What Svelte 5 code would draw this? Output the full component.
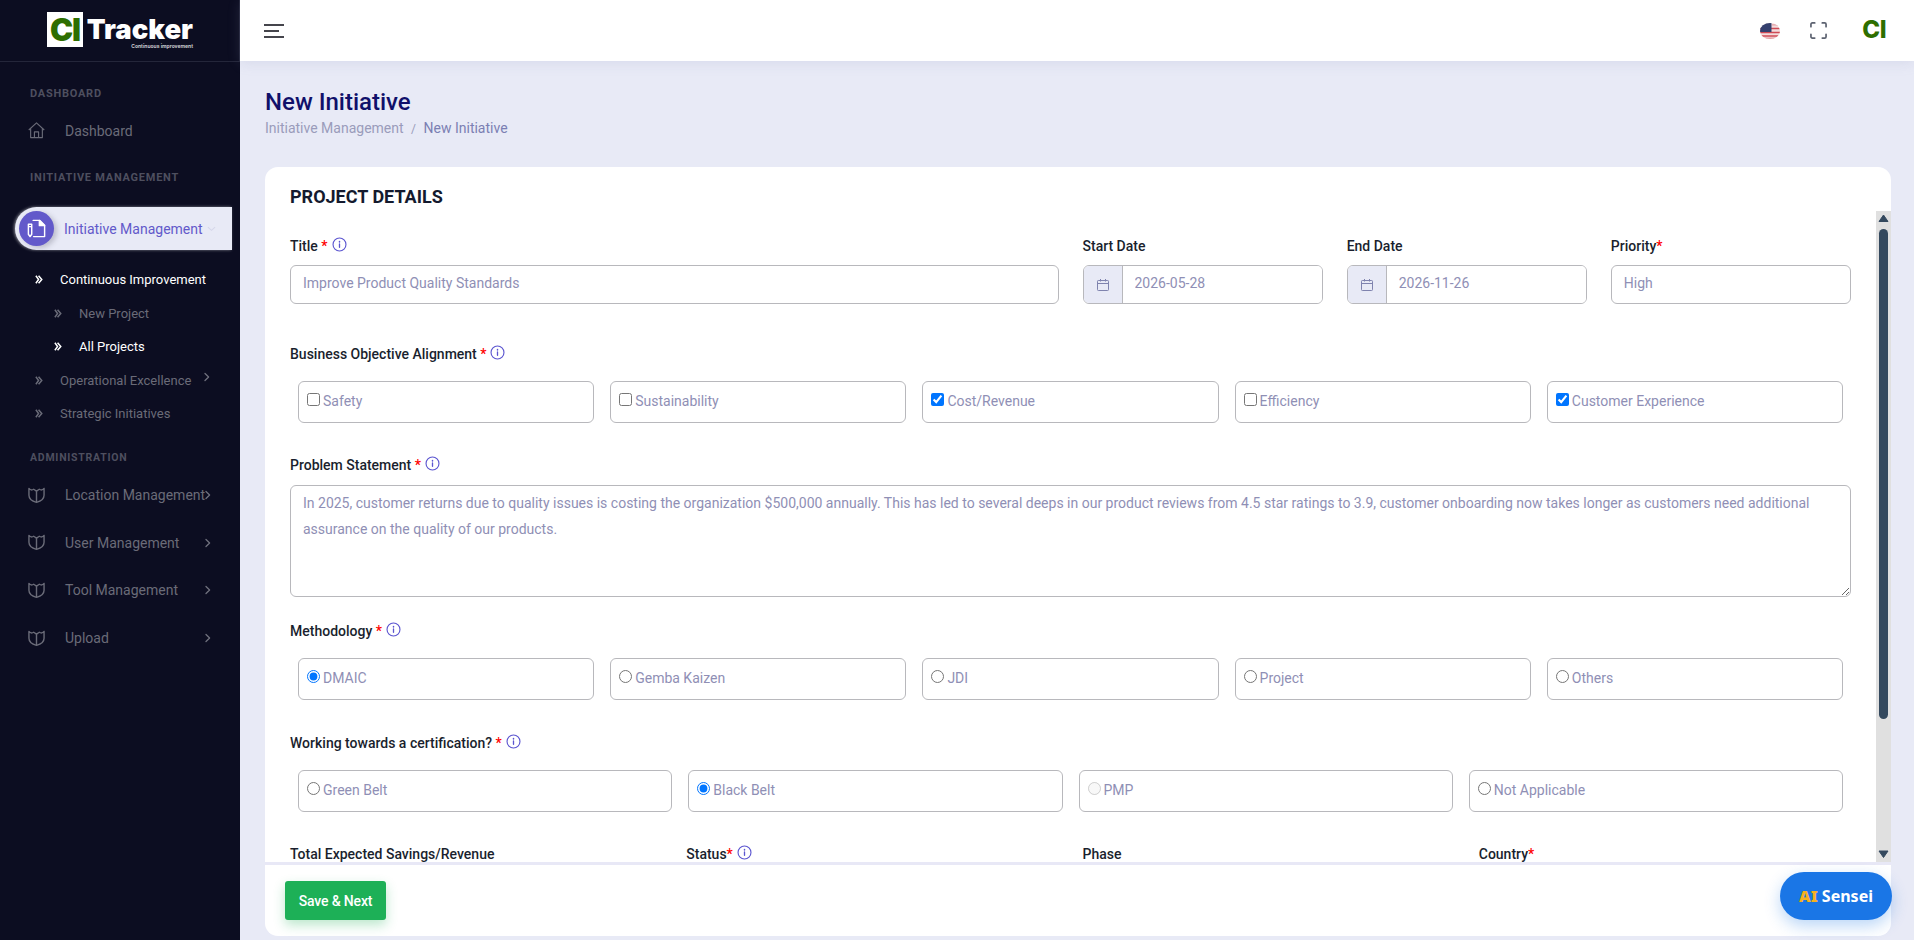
<script>
  const goals = [
    { label: 'Safety', on: false },
    { label: 'Sustainability', on: false },
    { label: 'Cost/Revenue', on: true },
    { label: 'Efficiency', on: false },
    { label: 'Customer Experience', on: true }
  ];
  const methods = [
    { label: 'DMAIC', on: true },
    { label: 'Gemba Kaizen', on: false },
    { label: 'JDI', on: false },
    { label: 'Project', on: false },
    { label: 'Others', on: false }
  ];
  const certs = [
    { label: 'Green Belt', on: false },
    { label: 'Black Belt', on: true },
    { label: 'PMP', on: false, off: true },
    { label: 'Not Applicable', on: false }
  ];
  const admin = ['Location Management', 'User Management', 'Tool Management', 'Upload'];
  const problem = 'In 2025, customer returns due to quality issues is costing the organization $500,000 annually. This has led to several deeps in our product reviews from 4.5 star ratings to 3.9, customer onboarding now takes longer as customers need additional assurance on the quality of our products.';
</script>

{#snippet info()}
  <svg class="info" viewBox="0 0 16 16" fill="none" stroke="currentColor" stroke-width="1.2" stroke-linecap="round">
    <circle cx="8" cy="8" r="6.9" />
    <path d="M8 7.4v3.6" stroke-width="1.4" />
    <path d="M8 4.9v.3" stroke-width="1.6" />
  </svg>
{/snippet}

{#snippet dbl()}
  <svg class="dbl" viewBox="0 0 9 10" fill="none" stroke="currentColor" stroke-width="1.7">
    <path d="M1 .8 4 5 1 9.200" />
    <path d="M4 .8 7.600 5 4 9.200" />
  </svg>
{/snippet}

{#snippet chev()}
  <svg class="chev" viewBox="0 0 8 10" fill="none" stroke="currentColor" stroke-width="1.3" stroke-linecap="round" stroke-linejoin="round">
    <path d="M2 1.500 5.600 5 2 8.500" />
  </svg>
{/snippet}

{#snippet shield()}
  <svg class="nav-ico" viewBox="0 0 18 18" fill="none" stroke="currentColor" stroke-width="1.5" stroke-linejoin="round">
    <path d="M1 1.500c1.500 1.800 3.200 2 5 .9L9 4.300l3-1.900c1.800 1.100 3.500.9 5-.9v7.200c0 3.700-3.400 6.300-8 7.600-4.600-1.300-8-3.900-8-7.600z" />
    <path d="M9 4.300v12" />
  </svg>
{/snippet}

{#snippet cal()}
  <span class="date-ico">
    <svg viewBox="0 0 14 14" fill="none" stroke="currentColor" stroke-width="1"><rect x="1.500" y="2.500" width="11" height="10" rx=".8" /><path d="M1.500 5.500h11M4.500 1v2.500M9.500 1v2.500" /></svg>
  </span>
{/snippet}

<div class="shell">
  <aside class="sidebar">
    <div class="brand">
      <div class="logo">
        <span class="logo-ci">CI</span>
        <div class="logo-words">
          <span class="logo-name">Tracker</span>
          <span class="logo-sub">Continuous improvement</span>
        </div>
      </div>
    </div>

    <nav class="nav">
      <div class="sec sec-a">DASHBOARD</div>
      <div class="item item-dash">
        <svg class="nav-ico" viewBox="0 0 18 18" fill="none" stroke="currentColor" stroke-width="1.2" stroke-linejoin="round">
          <path d="M.8 8.500 9 1l8.200 7.500" />
          <path d="M2.800 7v9.500h12.400V7" />
          <path d="M6.800 16.500v-6h4.400v6" />
        </svg>
        <span>Dashboard</span>
      </div>

      <div class="sec sec-b">INITIATIVE MANAGEMENT</div>
      <div class="active">
        <span class="active-dot">
          <svg viewBox="0 0 22 22" fill="none" stroke="#fff" stroke-width="1.500" stroke-linejoin="round" stroke-linecap="round">
            <path d="M7.500 2.500h7L19.500 7.500v12H8" />
            <path d="M14 2.500 19.500 8H14z" fill="#fff" />
            <path d="M2.500 6.500h3.500V17l-1.750 2.500L2.500 17zM2.500 9h3.500" />
          </svg>
        </span>
        <span class="active-label">Initiative Management</span>
        <svg class="active-chev" viewBox="0 0 10 6" fill="none" stroke="#d5d7ea" stroke-width="1.200"><path d="M1 1l4 3.500L9 1" /></svg>
      </div>

      <div class="sub sub-first on">{@render dbl()}<span>Continuous Improvement</span></div>
      <div class="sub deep">{@render dbl()}<span>New Project</span></div>
      <div class="sub deep on">{@render dbl()}<span>All Projects</span></div>
      <div class="sub">{@render dbl()}<span>Operational Excellence</span><span class="chev-up">{@render chev()}</span></div>
      <div class="sub">{@render dbl()}<span>Strategic Initiatives</span></div>

      <div class="sec sec-c">ADMINISTRATION</div>
      {#each admin as a}
        <div class="item item-admin">
          {@render shield()}
          <span>{a}</span>
          {@render chev()}
        </div>
      {/each}
    </nav>
  </aside>

  <div class="body">
    <header class="topbar">
      <button class="burger" aria-label="Menu">
        <svg viewBox="0 0 20 14" fill="none" stroke="#45454c" stroke-width="2">
          <path d="M0 1h20M0 7h15M0 13h20" />
        </svg>
      </button>
      <div class="top-right">
        <svg class="flag" viewBox="0 0 20 16" aria-label="US flag">
          <defs><clipPath id="fc"><ellipse cx="10" cy="8" rx="10" ry="8" /></clipPath></defs>
          <g clip-path="url(#fc)">
            <rect width="20" height="16" fill="#f3dcdc" />
            <path d="M0 5.500h20M0 9.500h20M0 13h20" stroke="#cf4a55" stroke-width="1.300" />
            <path d="M12 1.800h8" stroke="#e4a0a5" stroke-width="1.200" />
            <path d="M0 15.200h20" stroke="#e4a0a5" stroke-width="1.600" />
            <rect width="11.500" height="9" fill="#34406e" />
          </g>
        </svg>
        <svg class="full" viewBox="0 0 18 18" fill="none" stroke="#5c6270" stroke-width="1.800" stroke-linecap="round" stroke-linejoin="round">
          <path d="M1 5V2.500A1.500 1.500 0 0 1 2.500 1H5M13 1h2.500A1.500 1.500 0 0 1 17 2.500V5M17 13v2.500a1.500 1.500 0 0 1-1.500 1.500H13M5 17H2.500A1.500 1.500 0 0 1 1 15.500V13" />
        </svg>
        <span class="top-ci">CI</span>
      </div>
    </header>

    <main class="main">
      <div class="page-head">
        <h1>New Initiative</h1>
        <div class="crumbs">
          <span class="crumb">Initiative Management</span>
          <span class="slash">/</span>
          <span class="crumb-now">New Initiative</span>
        </div>
      </div>

      <section class="card">
        <h2>PROJECT DETAILS</h2>
        <div class="pane">
          <div class="scroll">
            <div class="row">
              <div class="col c6">
                <div class="lab">Title <i>*</i> {@render info()}</div>
                <input class="ctl" readonly value="Improve Product Quality Standards" />
              </div>
              <div class="col c2">
                <div class="lab">Start Date</div>
                <div class="date">
                  {@render cal()}
                  <input readonly value="2026-05-28" />
                </div>
              </div>
              <div class="col c2">
                <div class="lab">End Date</div>
                <div class="date">
                  {@render cal()}
                  <input readonly value="2026-11-26" />
                </div>
              </div>
              <div class="col c2">
                <div class="lab">Priority<i>*</i></div>
                <input class="ctl" readonly value="High" />
              </div>
            </div>

            <div class="lab lab-goal">Business Objective Alignment <i>*</i> {@render info()}</div>
            <div class="opts five">
              {#each goals as g}
                <label class="opt"><input type="checkbox" checked={g.on} />{g.label}</label>
              {/each}
            </div>

            <div class="lab lab-prob">Problem Statement <i>*</i> {@render info()}</div>
            <textarea class="area" readonly>{problem}</textarea>

            <div class="lab lab-meth">Methodology <i>*</i> {@render info()}</div>
            <div class="opts five">
              {#each methods as m}
                <label class="opt"><input type="radio" name="method" checked={m.on} />{m.label}</label>
              {/each}
            </div>

            <div class="lab lab-cert">Working towards a certification? <i>*</i> {@render info()}</div>
            <div class="opts four">
              {#each certs as c}
                <label class="opt"><input type="radio" name="cert" checked={c.on} disabled={c.off} />{c.label}</label>
              {/each}
            </div>

            <div class="row row-last">
              <div class="col c3">
                <div class="lab">Total Expected Savings/Revenue</div>
                <input class="ctl" readonly value="500000" />
              </div>
              <div class="col c3">
                <div class="lab">Status<i>*</i> {@render info()}</div>
                <input class="ctl" readonly value="Draft" />
              </div>
              <div class="col c3">
                <div class="lab">Phase</div>
                <input class="ctl" readonly value="Define" />
              </div>
              <div class="col c3">
                <div class="lab">Country<i>*</i></div>
                <input class="ctl" readonly value="United States" />
              </div>
            </div>
          </div>
          <div class="bar" aria-hidden="true">
            <svg class="arrow" viewBox="0 0 15 17"><path d="M7.500 4 12 10.500H3z" fill="#34495e" stroke="#34495e" stroke-linejoin="round" /></svg>
            <div class="thumb"></div>
            <svg class="arrow arrow-down" viewBox="0 0 15 17"><path d="M3 6h9l-4.500 6.500z" fill="#34495e" stroke="#34495e" stroke-linejoin="round" /></svg>
          </div>
        </div>
        <footer class="foot">
          <button class="save">Save &amp; Next</button>
        </footer>
      </section>
    </main>
  </div>

  <button class="sensei"><b>AI</b> Sensei</button>
</div>

<style>
  :global(body) {
    margin: 0;
    font-family: Roboto, "Liberation Sans", sans-serif;
    background: #e8eaf6;
  }
  .shell {
    display: flex;
    height: 940px;
    overflow: hidden;
    position: relative;
  }

  /* sidebar */
  .sidebar {
    flex: 0 0 240px;
    background: #0c0d21;
    color: #6a6b78;
    display: flex;
    flex-direction: column;
  }
  .brand {
    height: 62px;
    box-sizing: border-box;
    border-bottom: 1px solid #24263a;
    border-right: 1px solid #24263a;
    padding: 12px 0 0 47px;
  }
  .logo {
    display: flex;
    align-items: flex-start;
    gap: 1px;
  }
  .logo-ci {
    width: 36px;
    height: 35px;
    background: #fff;
    color: #2e6e00;
    font: 900 31px/36px Inter, sans-serif;
    text-align: center;
    letter-spacing: -1px;
  }
  .logo-words {
    display: flex;
    flex-direction: column;
    align-items: flex-end;
    width: 109px;
    margin-top: 4px;
  }
  .logo-name {
    color: #fff;
    font: 900 27.500px/27px Inter, sans-serif;
    height: 27px;
    white-space: nowrap;
  }
  .logo-sub {
    color: #c9c9cf;
    font: 700 5px/6px Inter, sans-serif;
    white-space: nowrap;
  }
  .sec {
    font-size: 11px;
    font-weight: 700;
    letter-spacing: .75px;
    color: #4e4f5f;
    padding-left: 30px;
    line-height: 14px;
  }
  .sec-a { margin-top: 25px; }
  .sec-b { margin-top: 17px; }
  .sec-c { margin-top: 20px; margin-bottom: 7px; font-size: 10.500px; }
  .item {
    display: flex;
    align-items: center;
    font-size: 14px;
    padding-left: 28px;
    height: 47px;
  }
  .item-dash { margin-top: 6px; }
  .item-admin { height: 47.600px; }
  .item > span {
    margin-left: 20px;
    width: 139px;
    white-space: nowrap;
  }
  .nav-ico {
    width: 17px;
    height: 17px;
    flex: none;
  }
  .chev {
    width: 8px;
    height: 10px;
    flex: none;
    color: #70717e;
  }
  .active {
    margin: 22px 0 0 15px;
    width: 217px;
    height: 43px;
    background: #e8eaf6;
    border-radius: 22px 0 0 22px;
    display: flex;
    align-items: center;
    position: relative;
    box-shadow: -1px 0 3px rgba(255, 255, 255, .5);
  }
  .active-dot {
    width: 35px;
    height: 35px;
    border-radius: 50%;
    background: #6259ca;
    margin-left: 4px;
    display: flex;
    align-items: center;
    justify-content: center;
    box-shadow: 3px 2px 5px rgba(60, 60, 80, .25);
  }
  .active-dot svg {
    width: 21px;
    height: 21px;
  }
  .active-label {
    margin-left: 10px;
    font-size: 14px;
    color: #6259ca;
  }
  .active-chev {
    width: 9px;
    height: 6px;
    margin-left: 4px;
  }
  .sub {
    display: flex;
    align-items: center;
    height: 33.500px;
    font-size: 13px;
    padding-left: 35px;
    color: #6a6b78;
    position: relative;
  }
  .sub.on { color: #fff; }
  .sub.deep { padding-left: 54px; }
  .sub-first { margin-top: 13px; }
  .dbl {
    width: 8px;
    height: 9px;
    margin-right: 17px;
    flex: none;
  }
  .chev-up {
    position: absolute;
    left: 203px;
    top: 6px;
  }

  /* main */
  .body {
    flex: 1;
    min-width: 0;
    display: flex;
    flex-direction: column;
  }
  .topbar {
    height: 61px;
    flex: none;
    background: #fff;
    display: flex;
    align-items: center;
    justify-content: space-between;
    padding: 0 28px 0 24px;
    box-shadow: 0 2px 12px rgba(140, 145, 190, .18);
    position: relative;
  }
  .burger {
    width: 20px;
    height: 14px;
    border: 0;
    padding: 0;
    background: none;
  }
  .burger svg { display: block; }
  .top-right {
    display: flex;
    align-items: center;
  }
  .flag { width: 20px; height: 16px; }
  .full { width: 17px; height: 17px; margin-left: 30px; }
  .top-ci {
    margin-left: 35px;
    margin-top: -2px;
    font: 800 24px/28px Inter, sans-serif;
    color: #2e6e00;
    letter-spacing: -.5px;
  }
  .main {
    flex: 1;
    min-height: 0;
    display: flex;
    flex-direction: column;
    padding: 27px 23px 4px 25px;
  }
  .page-head { height: 79px; flex: none; }
  h1 {
    margin: 0;
    font-size: 24px;
    line-height: 28px;
    font-weight: 500;
    color: #10106a;
  }
  .crumbs {
    margin-top: 2px;
    font-size: 14px;
    line-height: 20px;
    color: #9a9cbb;
  }
  .slash { margin: 0 4px; font-size: 12px; }
  .crumb-now { color: #7b7fb3; }
  .card {
    flex: 1;
    min-height: 0;
    background: #fff;
    border-radius: 13px;
    display: flex;
    flex-direction: column;
  }
  h2 {
    margin: 0;
    font-size: 18px;
    line-height: 22px;
    font-weight: 700;
    color: #141a2e;
    padding: 19px 25px 3px;
    flex: none;
  }
  .pane {
    flex: 1;
    min-height: 0;
    display: flex;
  }
  .scroll {
    flex: 1;
    min-width: 0;
    overflow-y: auto;
    scrollbar-width: none;
    padding: 25px 25px 0;
    box-sizing: border-box;
  }
  .bar {
    flex: 0 0 15px;
    background: #e0e0e0;
    display: flex;
    flex-direction: column;
  }
  .arrow {
    width: 15px;
    height: 17px;
    flex: none;
    display: block;
  }
  .arrow-down { margin-top: auto; }
  .thumb {
    width: 9px;
    height: 490px;
    margin: 1px 0 0 3px;
    background: #34495e;
    border-radius: 5px;
    flex: none;
  }
  .row {
    display: grid;
    column-gap: 24px;
    grid-template-columns: repeat(12, 1fr);
  }
  .c6 { grid-column: span 6; }
  .c3 { grid-column: span 3; }
  .c2 { grid-column: span 2; }
  .col { min-width: 0; }
  .lab {
    font-size: 14px;
    line-height: 20px;
    font-weight: 500;
    color: #1a1f2e;
    display: flex;
    align-items: center;
    white-space: pre;
  }
  .lab i {
    font-style: normal;
    color: #f00;
  }
  .info {
    width: 15px;
    height: 15px;
    color: #5b55d0;
    margin: -3px 0 0 4px;
  }
  .ctl, .date, .area {
    box-sizing: border-box;
    border: 1px solid #b8b8bc;
    border-radius: 6px;
    background: #fff;
  }
  .ctl {
    display: block;
    width: 100%;
    height: 39px;
    margin-top: 9px;
    padding: 0 12px 3px;
    font: 14px Roboto, sans-serif;
    color: #8f8fb5;
    outline: 0;
  }
  .date {
    display: flex;
    height: 39px;
    margin-top: 9px;
    overflow: hidden;
  }
  .date input {
    border: 0;
    outline: 0;
    flex: 1;
    min-width: 0;
    padding: 0 12px 3px;
    font: 14px Roboto, sans-serif;
    color: #8f8fb5;
  }
  .date-ico {
    width: 38px;
    flex: none;
    background: #e8eaf6;
    border-right: 1px solid #b8b8bc;
    color: #7f83ae;
    display: flex;
    align-items: center;
    justify-content: center;
  }
  .date-ico svg { width: 14px; height: 14px; }
  .lab-goal { margin-top: 40px; }
  .lab-prob { margin-top: 32px; }
  .lab-meth { margin-top: 24px; }
  .lab-cert { margin-top: 33px; }
  .opts {
    display: grid;
    column-gap: 16px;
    margin: 17px 8px 0;
  }
  .five { grid-template-columns: repeat(5, 1fr); }
  .four { grid-template-columns: repeat(4, 1fr); }
  .opt {
    box-sizing: border-box;
    height: 42px;
    border: 1px solid #b8b8bc;
    border-radius: 6px;
    padding: 0 8px 3px;
    display: flex;
    align-items: center;
    font-size: 14px;
    color: #8f8fb5;
  }
  .opt input {
    margin: -3px 3px 0 0;
    flex: none;
    width: 13px;
    height: 13px;
  }
  .area {
    display: block;
    width: 100%;
    height: 112px;
    margin-top: 10px;
    padding: 5px 12px;
    font: 14px/25.600px Roboto, sans-serif;
    color: #8f8fb5;
    outline: 0;
    resize: vertical;
  }
  .row-last { margin-top: 32px; padding-bottom: 100px; }
  .foot {
    flex: none;
    height: 74px;
    box-sizing: border-box;
    border-top: 3px solid #e8e8f6;
    padding: 16px 0 0 20px;
  }
  .save {
    width: 101px;
    height: 39px;
    border: 0;
    border-radius: 3px;
    background: #1db057;
    color: #fff;
    font: 500 14px Roboto, sans-serif;
    letter-spacing: -.15px;
    box-shadow: 0 5px 12px rgba(29, 176, 87, .3);
  }
  .sensei {
    position: absolute;
    left: 1780px;
    top: 872px;
    width: 112px;
    height: 48px;
    border: 0;
    border-radius: 24px;
    background: #1a76e6;
    color: #fff;
    font: 700 16px "Noto Sans", sans-serif;
    box-shadow: 0 6px 16px rgba(26, 118, 230, .3);
  }
  .sensei b { color: #f5b11e; }
</style>
